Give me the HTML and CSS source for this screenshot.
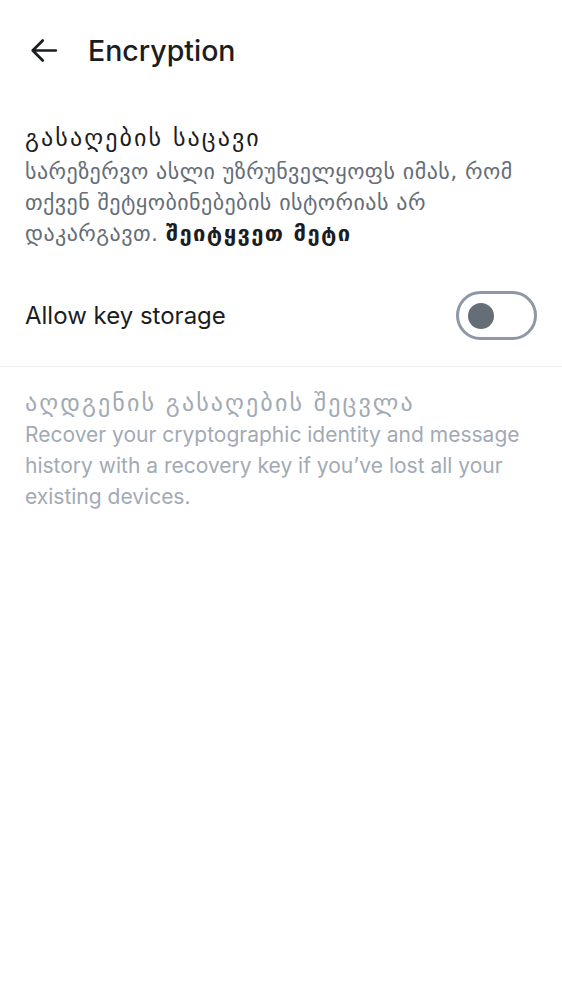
FILE: index.html
```html
<!DOCTYPE html>
<html lang="ka">
<head>
<meta charset="utf-8">
<link rel="stylesheet" href="styles.css">
</head>
<body>
<header class="topbar">
  <svg class="back" width="37" height="37" viewBox="0 0 24 24"><path d="M20 12H5M11.5 5.5L5 12l6.5 6.5" fill="none" stroke="#1b1d22" stroke-width="1.75" stroke-linecap="round" stroke-linejoin="round"/></svg>
  <h1 class="title">Encryption</h1>
</header>
<section class="block">
  <h2 class="heading ka">გასაღების საცავი</h2>
  <p class="desc ka">სარეზერვო ასლი უზრუნველყოფს იმას, რომ თქვენ შეტყობინებების ისტორიას არ დაკარგავთ. <b class="link">შეიტყვეთ მეტი</b></p>
</section>
<div class="row">
  <span class="label">Allow key storage</span>
  <span class="toggle"><span class="knob"></span></span>
</div>
<div class="divider"></div>
<section class="block disabled">
  <h2 class="heading ka">აღდგენის გასაღების შეცვლა</h2>
  <p class="desc">Recover your cryptographic identity and message history with a recovery key if you’ve lost all your existing devices.</p>
</section>
</body>
</html>
```
FILE: styles.css
```css
html, body { margin: 0; padding: 0; background: #fff; }
body { font-family: Inter, Roboto, "DejaVu Sans", sans-serif; color: #1b1d22; width: 562px; }
.topbar { display: flex; align-items: center; height: 100px; padding: 0 0 0 25px; box-sizing: border-box; }
.back { display: block; }
.title { font-weight: 500; font-size: 28.5px; margin: 0 0 0 26px; }
.block { padding: 22px 18px 0 25px; }
.heading { font-size: 22px; font-weight: 400; margin: 0 0 2px; line-height: 32px; }
.desc { font-size: 21px; line-height: 31px; color: #656d77; margin: 0; }
.ka { font-family: "DejaVu Sans", sans-serif; }
.heading.ka { letter-spacing: 2.1px; font-size: 24px; }
.desc.ka { font-size: 22px; letter-spacing: 0.45px; }
.link { color: #1b1d22; font-weight: 700; letter-spacing: 1.4px; }
.row { display: flex; align-items: center; justify-content: space-between; padding: 0 25px; height: 101px; margin-top: 16px; }
.label { font-size: 24px; }
.toggle { width: 81px; height: 49px; border: 3px solid #8d97a5; border-radius: 25px; display: flex; align-items: center; padding-left: 9px; box-sizing: border-box; }
.knob { width: 26px; height: 26px; border-radius: 50%; background: #656d77; }
.divider { height: 1px; background: #ebeef2; }
.disabled .heading, .disabled .desc { color: #a2aab5; }
.disabled { padding-top: 21px; }
.disabled .heading { margin-bottom: 0; line-height: 31px; }
```
